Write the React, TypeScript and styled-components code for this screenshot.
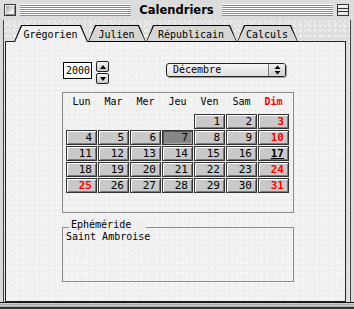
import React from 'react';
import styled, { createGlobalStyle, css } from 'styled-components';

const Global = createGlobalStyle`
  html, body { margin: 0; padding: 0; background: #d9d9d9; }
  body { font-family: "DejaVu Sans Mono", "Liberation Mono", monospace; color: #000; }
  * { box-sizing: border-box; }
`;

const dots = css`
  background-image:
    radial-gradient(circle at 1px 1px, rgba(255,255,255,0.95) 0.55px, transparent 0.9px),
    radial-gradient(circle at 3px 4px, rgba(255,255,255,0.95) 0.55px, transparent 0.9px);
  background-size: 5px 5px, 7px 6px;
`;

const Window = styled.div`
  width: 354px;
  height: 309px;
  display: flex;
  flex-direction: column;
  background: #d9d9d9;
  overflow: hidden;
`;

const TitleBar = styled.div`
  height: 20px;
  flex: none;
  display: flex;
  align-items: center;
  gap: 4px;
  padding: 0 5px 0 4px;
  background: #dcdcdc;
`;

const CloseBox = styled.div`
  width: 12px;
  height: 12px;
  flex: none;
  border: 1px solid #3a3a3a;
  background: linear-gradient(135deg, #9a9a9a, #f2f2f2 70%);
  box-shadow: inset 1px 1px 0 #eee, inset -1px -1px 0 #888;
`;

const Stripes = styled.div`
  flex: 1;
  height: 12px;
  background: repeating-linear-gradient(to bottom, #fff 0 1px, #8a8a8a 1px 2px);
`;

const Title = styled.div`
  font-family: "DejaVu Sans", sans-serif;
  font-weight: bold;
  font-size: 11.5px;
  padding: 0 4px;
  line-height: 14px;
`;

const ZoomBox = styled.div`
  width: 12px;
  height: 12px;
  flex: none;
  display: flex;
`;

const Content = styled.div`
  flex: 1;
  display: flex;
  flex-direction: column;
  margin: 0 3px;
  border-left: 1px solid #444;
  border-right: 1px solid #444;
  padding: 5px 4px 0 1px;
  background-color: #dedede;
  ${dots};
`;

const TabRow = styled.div`
  position: relative;
  z-index: 1;
  display: flex;
  padding-left: 9px;
  margin-bottom: -1px;
`;

const tabShape = 'polygon(0 100%, 7px 0, calc(100% - 7px) 0, 100% 100%)';

const Tab = styled.div<{ $active?: boolean; $w: number }>`
  position: relative;
  width: ${p => p.$w}px;
  height: 17px;
  display: flex;
  align-items: center;
  justify-content: center;
  font-size: 10px;
  background: #000;
  clip-path: ${tabShape};
  z-index: ${p => (p.$active ? 2 : 1)};
  &::before {
    content: '';
    position: absolute;
    left: 1px;
    right: 1px;
    top: 1px;
    bottom: ${p => (p.$active ? 0 : 1)}px;
    background: ${p => (p.$active ? '#efefef' : '#d6d6d6')};
    clip-path: ${tabShape};
  }
`;

const TabLabel = styled.span`
  position: relative;
  padding-top: 1px;
  margin-left: -1px;
`;

const Panel = styled.div`
  flex: 1;
  display: flex;
  flex-direction: column;
  align-items: flex-start;
  border: 1px solid #222;
  background-color: #efefef;
  ${dots};
  padding: 19px 0 0 56px;
`;

const TopRow = styled.div`
  display: flex;
  align-items: flex-start;
  height: 23px;
`;

const YearField = styled.div`
  width: 29px;
  height: 17px;
  margin: 1px 0 0 1px;
  border: 1px solid #000;
  background: #fff;
  font-size: 10px;
  line-height: 15px;
  padding-left: 2px;
`;

const Stepper = styled.div`
  width: 13px;
  height: 23px;
  margin-left: 4px;
  display: flex;
  flex-direction: column;
  gap: 1px;
`;

const StepBtn = styled.div<{ $down?: boolean }>`
  flex: 1;
  border: 1px solid #222;
  border-radius: 2px;
  background: linear-gradient(#f4f4f4, #c8c8c8);
  display: flex;
  align-items: center;
  justify-content: center;
  &::after {
    content: '';
    border-left: 3.5px solid transparent;
    border-right: 3.5px solid transparent;
    ${p => (p.$down ? 'border-top: 4px solid #000;' : 'border-bottom: 4px solid #000;')}
  }
`;

const Popup = styled.div`
  width: 120px;
  height: 14px;
  margin: 2px 0 0 57px;
  display: flex;
  border: 1px solid #222;
  border-radius: 3px;
  box-shadow: 1px 1px 0 #999;
  background: linear-gradient(#f6f6f6, #e0e0e0);
  overflow: hidden;
`;

const PopupText = styled.div`
  flex: 1;
  font-size: 10px;
  line-height: 12px;
  padding-left: 6px;
`;

const PopupArrow = styled.div`
  width: 17px;
  border-left: 1px solid #777;
  background: linear-gradient(#f0f0f0, #d0d0d0);
  display: flex;
  align-items: center;
  justify-content: center;
`;

const Calendar = styled.div`
  margin-top: 8px;
  width: 232px;
  border: 1px solid #8a8a8a;
  padding: 2px 3px 19px 3px;
`;

const HeaderRow = styled.div`
  display: grid;
  grid-template-columns: repeat(7, 31px);
  column-gap: 1px;
  height: 13px;
  margin-bottom: 6px;
`;

const HeadCell = styled.div<{ $red?: boolean }>`
  text-align: center;
  font-size: 10px;
  line-height: 13px;
  color: ${p => (p.$red ? '#ff0000' : '#000')};
  font-weight: ${p => (p.$red ? 'bold' : 'normal')};
`;

const Grid = styled.div`
  display: grid;
  grid-template-columns: repeat(7, 31px);
  grid-auto-rows: 15px;
  gap: 1px;
`;

type Kind = 'normal' | 'selected' | 'red' | 'today';

const Day = styled.div<{ $kind: Kind }>`
  border: 1px solid #333;
  background: ${p => (p.$kind === 'selected' ? '#878787' : '#c9c9c9')};
  box-shadow: ${p =>
    p.$kind === 'selected'
      ? 'inset 1px 1px 0 #555, inset -1px -1px 0 #a0a0a0'
      : 'inset 1px 1px 0 #fff, inset -1px -1px 0 #7a7a7a'};
  text-align: right;
  padding-right: 4px;
  font-size: 11px;
  line-height: 13px;
  color: ${p => (p.$kind === 'red' ? '#ff0000' : '#000')};
  font-weight: ${p => (p.$kind === 'red' || p.$kind === 'today' ? 'bold' : 'normal')};
  text-decoration: ${p => (p.$kind === 'today' ? 'underline' : 'none')};
  text-underline-offset: 1px;
`;

const Empty = styled.div``;

const GroupBox = styled.div`
  position: relative;
  margin-top: 14px;
  width: 232px;
  height: 55px;
  border: 1px solid #8a8a8a;
  padding: 2px 3px;
  font-size: 10px;
  line-height: 13px;
`;

const Legend = styled.div`
  position: absolute;
  top: -10px;
  left: 6px;
  padding: 0 15px 0 2px;
  background: #efefef;
  line-height: 13px;
`;

const BottomFrame = styled.div`
  height: 7px;
  flex: none;
  border-top: 1px solid #111;
  background: repeating-linear-gradient(to bottom, #cfcfcf 0 1px, #a8a8a8 1px 2px);
  border-bottom: 2px solid #333;
`;

const tabs = [
  { label: 'Grégorien', w: 74, active: true },
  { label: 'Julien', w: 58 },
  { label: 'Républicain', w: 91 },
  { label: 'Calculs', w: 61 },
];

const heads = ['Lun', 'Mar', 'Mer', 'Jeu', 'Ven', 'Sam', 'Dim'];

function kindOf(d: number): Kind {
  if (d === 7) return 'selected';
  if (d === 17) return 'today';
  if (d === 25 || d === 3 || d === 10 || d === 24 || d === 31) return 'red';
  return 'normal';
}

export default function App() {
  const cells: (number | null)[] = [null, null, null, null];
  for (let d = 1; d <= 31; d++) cells.push(d);
  return (
    <>
      <Global />
      <Window>
        <TitleBar>
          <CloseBox />
          <Stripes />
          <Title>Calendriers</Title>
          <Stripes />
          <ZoomBox>
            <svg width="12" height="12" viewBox="0 0 12 12">
              <rect x="0.5" y="0.5" width="11" height="11" fill="#e8e8e8" stroke="#333" />
              <line x1="1" y1="4.5" x2="11" y2="4.5" stroke="#333" />
              <line x1="1" y1="7.5" x2="11" y2="7.5" stroke="#333" />
              <line x1="2" y1="2" x2="10" y2="2" stroke="#fff" />
            </svg>
          </ZoomBox>
        </TitleBar>
        <Content>
          <TabRow>
            {tabs.map(t => (
              <Tab key={t.label} $w={t.w} $active={t.active}>
                <TabLabel>{t.label}</TabLabel>
              </Tab>
            ))}
          </TabRow>
          <Panel>
            <TopRow>
              <YearField>2000</YearField>
              <Stepper>
                <StepBtn />
                <StepBtn $down />
              </Stepper>
              <Popup>
                <PopupText>Décembre</PopupText>
                <PopupArrow>
                  <svg width="7" height="10" viewBox="0 0 7 10">
                    <path d="M3.5 0.5 L6.5 4 L0.5 4 Z" fill="#000" />
                    <path d="M0.5 6 L6.5 6 L3.5 9.5 Z" fill="#000" />
                  </svg>
                </PopupArrow>
              </Popup>
            </TopRow>
            <Calendar>
              <HeaderRow>
                {heads.map(h => (
                  <HeadCell key={h} $red={h === 'Dim'}>{h}</HeadCell>
                ))}
              </HeaderRow>
              <Grid>
                {cells.map((d, i) =>
                  d === null ? <Empty key={i} /> : <Day key={i} $kind={kindOf(d)}>{d}</Day>
                )}
              </Grid>
            </Calendar>
            <GroupBox>
              <Legend>Ephéméride</Legend>
              Saint Ambroise
            </GroupBox>
          </Panel>
        </Content>
        <BottomFrame />
      </Window>
    </>
  );
}
